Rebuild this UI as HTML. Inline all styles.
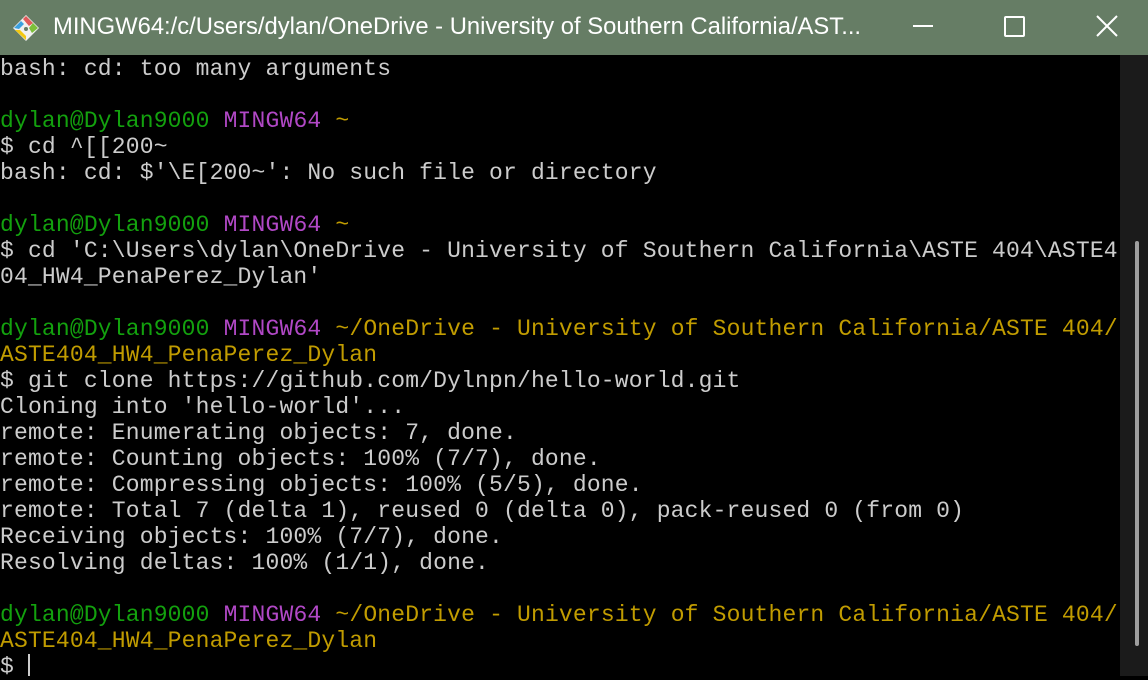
<!DOCTYPE html>
<html><head><meta charset="utf-8"><style>
html,body{margin:0;padding:0;width:1148px;height:676px;overflow:hidden;background:#000}
.tb{position:absolute;left:0;top:0;width:1148px;height:55px;background:#667d65;color:#fff;font-family:"Liberation Sans",sans-serif;font-size:23.8px}
.tb .t{position:absolute;left:53px;top:13px;white-space:nowrap}
.term{position:absolute;left:0;top:56px;width:1120px;font-family:"Liberation Mono",monospace;font-size:23px;letter-spacing:0.17px;line-height:26px;color:#cccccc;white-space:pre}
.g{color:#13a10e}.m{color:#b148c6}.y{color:#c19c00}
.sb{position:absolute;left:1120px;top:55px;width:28px;height:621px;background:#1b1b1b}
.th{position:absolute;left:15px;top:186px;width:4px;height:405px;background:#9f9f9f;border-radius:2px}
.cur{position:absolute;left:28px;top:654px;width:2px;height:22px;background:#cccccc}
</style></head><body>
<div class="tb">
<svg style="position:absolute;left:10px;top:13px" width="32" height="30" viewBox="0 0 32 30">
<polygon points="16,2 29,15 16,28 3,15" fill="#f0f0f0"/>
<polygon points="16,3 23,10 19,13 13,6" fill="#e05a5a"/>
<polygon points="23,10 28,15 22,20 19,15" fill="#7cbf3a"/>
<polygon points="10,17 16,23 16,27 5,17" fill="#f2c811"/>
<polygon points="4,15 11,8 14,11 9,16" fill="#3aa0e0"/>
<circle cx="16" cy="16" r="2" fill="#667d65"/>
</svg>
<div class="t">MINGW64:/c/Users/dylan/OneDrive - University of Southern California/AST...</div>
<div style="position:absolute;left:913px;top:25px;width:20px;height:2px;background:#fff"></div>
<div style="position:absolute;left:1004px;top:16px;width:17px;height:17px;border:2px solid #fff;border-radius:2px"></div>
<svg style="position:absolute;left:1096px;top:15px" width="22" height="22"><path d="M1 1L21 21M21 1L1 21" stroke="#fff" stroke-width="2"/></svg>
</div>
<div class="term">bash: cd: too many arguments

<span class="g">dylan@Dylan9000</span> <span class="m">MINGW64</span> <span class="y">~</span>
$ cd ^[[200~
bash: cd: $'\E[200~': No such file or directory

<span class="g">dylan@Dylan9000</span> <span class="m">MINGW64</span> <span class="y">~</span>
$ cd 'C:\Users\dylan\OneDrive - University of Southern California\ASTE 404\ASTE4
04_HW4_PenaPerez_Dylan'

<span class="g">dylan@Dylan9000</span> <span class="m">MINGW64</span> <span class="y">~/OneDrive - University of Southern California/ASTE 404/</span>
<span class="y">ASTE404_HW4_PenaPerez_Dylan</span>
$ git clone https://github.com/Dylnpn/hello-world.git
Cloning into 'hello-world'...
remote: Enumerating objects: 7, done.
remote: Counting objects: 100% (7/7), done.
remote: Compressing objects: 100% (5/5), done.
remote: Total 7 (delta 1), reused 0 (delta 0), pack-reused 0 (from 0)
Receiving objects: 100% (7/7), done.
Resolving deltas: 100% (1/1), done.

<span class="g">dylan@Dylan9000</span> <span class="m">MINGW64</span> <span class="y">~/OneDrive - University of Southern California/ASTE 404/</span>
<span class="y">ASTE404_HW4_PenaPerez_Dylan</span>
$ </div>
<div class="cur"></div>
<div class="sb"><div class="th"></div></div>
</body></html>
